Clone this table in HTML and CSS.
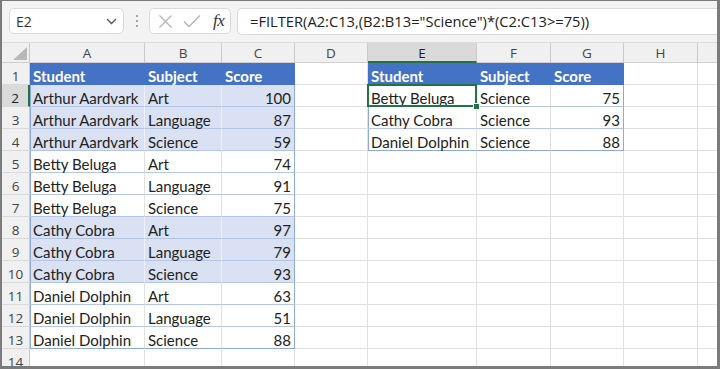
FILE: index.html
```html
<!DOCTYPE html>
<html>
<head>
<meta charset="utf-8">
<link rel="stylesheet" href="styles.css">
</head>
<body>
<div class="frame">
  <div class="topbar">
    <div class="namebox"><span class="nb-text">E2</span>
      <svg class="chev" width="11" height="7" viewBox="0 0 11 7"><path d="M1 1 L5.5 5.5 L10 1" fill="none" stroke="#555" stroke-width="1.3"/></svg>
    </div>
    <div class="dots"><i></i><i></i><i></i></div>
    <div class="fxbox">
      <svg width="15" height="15" viewBox="0 0 15 15"><path d="M1.5 1.5 L13.5 13.5 M13.5 1.5 L1.5 13.5" stroke="#b3b3b3" stroke-width="1.3" fill="none"/></svg>
      <svg width="18" height="14" viewBox="0 0 18 14"><path d="M1 7.5 L6 12.5 L17 1.5" stroke="#b3b3b3" stroke-width="1.3" fill="none"/></svg>
      <span class="fx">fx</span>
    </div>
    <div class="formula">=FILTER(A2:C13,(B2:B13="Science")*(C2:C13&gt;=75))</div>
  </div>
  <div class="grid">
    <div class="cell hd corner"><span class="tri"></span></div>
    <div class="cell hd">A</div><div class="cell hd">B</div><div class="cell hd">C</div><div class="cell hd">D</div>
    <div class="cell hd sel-col">E</div><div class="cell hd">F</div><div class="cell hd">G</div><div class="cell hd">H</div><div class="cell hd"></div>

    <div class="cell rn">1</div>
    <div class="cell th">Student</div><div class="cell th">Subject</div><div class="cell th">Score</div><div class="cell"></div>
    <div class="cell th">Student</div><div class="cell th">Subject</div><div class="cell th">Score</div><div class="cell"></div><div class="cell"></div>

    <div class="cell rn sel-row">2</div>
    <div class="cell t band tl">Arthur Aardvark</div><div class="cell t band">Art</div><div class="cell t band tr num">100</div><div class="cell"></div>
    <div class="cell t tl active">Betty Beluga<span class="handle"></span></div><div class="cell t">Science</div><div class="cell t tr num">75</div><div class="cell"></div><div class="cell"></div>

    <div class="cell rn">3</div>
    <div class="cell t band tl">Arthur Aardvark</div><div class="cell t band">Language</div><div class="cell t band tr num">87</div><div class="cell"></div>
    <div class="cell t tl">Cathy Cobra</div><div class="cell t">Science</div><div class="cell t tr num">93</div><div class="cell"></div><div class="cell"></div>

    <div class="cell rn">4</div>
    <div class="cell t band tl">Arthur Aardvark</div><div class="cell t band">Science</div><div class="cell t band tr num">59</div><div class="cell"></div>
    <div class="cell t tl tb">Daniel Dolphin</div><div class="cell t tb">Science</div><div class="cell t tr tb num">88</div><div class="cell"></div><div class="cell"></div>

    <div class="cell rn">5</div>
    <div class="cell t tl">Betty Beluga</div><div class="cell t">Art</div><div class="cell t tr num">74</div><div class="cell"></div>
    <div class="cell"></div><div class="cell"></div><div class="cell"></div><div class="cell"></div><div class="cell"></div>

    <div class="cell rn">6</div>
    <div class="cell t tl">Betty Beluga</div><div class="cell t">Language</div><div class="cell t tr num">91</div><div class="cell"></div>
    <div class="cell"></div><div class="cell"></div><div class="cell"></div><div class="cell"></div><div class="cell"></div>

    <div class="cell rn">7</div>
    <div class="cell t tl">Betty Beluga</div><div class="cell t">Science</div><div class="cell t tr num">75</div><div class="cell"></div>
    <div class="cell"></div><div class="cell"></div><div class="cell"></div><div class="cell"></div><div class="cell"></div>

    <div class="cell rn">8</div>
    <div class="cell t band tl">Cathy Cobra</div><div class="cell t band">Art</div><div class="cell t band tr num">97</div><div class="cell"></div>
    <div class="cell"></div><div class="cell"></div><div class="cell"></div><div class="cell"></div><div class="cell"></div>

    <div class="cell rn">9</div>
    <div class="cell t band tl">Cathy Cobra</div><div class="cell t band">Language</div><div class="cell t band tr num">79</div><div class="cell"></div>
    <div class="cell"></div><div class="cell"></div><div class="cell"></div><div class="cell"></div><div class="cell"></div>

    <div class="cell rn">10</div>
    <div class="cell t band tl">Cathy Cobra</div><div class="cell t band">Science</div><div class="cell t band tr num">93</div><div class="cell"></div>
    <div class="cell"></div><div class="cell"></div><div class="cell"></div><div class="cell"></div><div class="cell"></div>

    <div class="cell rn">11</div>
    <div class="cell t tl">Daniel Dolphin</div><div class="cell t">Art</div><div class="cell t tr num">63</div><div class="cell"></div>
    <div class="cell"></div><div class="cell"></div><div class="cell"></div><div class="cell"></div><div class="cell"></div>

    <div class="cell rn">12</div>
    <div class="cell t tl">Daniel Dolphin</div><div class="cell t">Language</div><div class="cell t tr num">51</div><div class="cell"></div>
    <div class="cell"></div><div class="cell"></div><div class="cell"></div><div class="cell"></div><div class="cell"></div>

    <div class="cell rn">13</div>
    <div class="cell t tl tb">Daniel Dolphin</div><div class="cell t tb">Science</div><div class="cell t tr tb num">88</div><div class="cell"></div>
    <div class="cell"></div><div class="cell"></div><div class="cell"></div><div class="cell"></div><div class="cell"></div>

    <div class="cell rn last">14</div>
    <div class="cell"></div><div class="cell"></div><div class="cell"></div><div class="cell"></div>
    <div class="cell"></div><div class="cell"></div><div class="cell"></div><div class="cell"></div><div class="cell"></div>
  </div>
</div>
</body>
</html>
```

FILE: styles.css
```css
html, body {
  margin: 0;
  padding: 0;
  background: #ffffff;
}
.frame {
  width: 720px;
  height: 369px;
  box-sizing: border-box;
  border-style: solid;
  border-color: #7b7b7b;
  border-width: 1px 3px 3px 2px;
  overflow: hidden;
  display: flex;
  flex-direction: column;
  background: #ffffff;
}
.topbar {
  height: 42px;
  flex: none;
  box-sizing: border-box;
  background: #f3f3f3;
  border-bottom: 1px solid #dcdcdc;
  display: flex;
  align-items: flex-start;
  padding: 7px 0 0 7px;
  font-family: "Open Sans", "Noto Sans", sans-serif;
}
.namebox {
  width: 115px;
  height: 26px;
  box-sizing: border-box;
  background: #ffffff;
  border: 1px solid #d9d9d9;
  border-radius: 5px;
  display: flex;
  align-items: center;
  justify-content: space-between;
  padding: 0 6px 0 6px;
}
.nb-text {
  font-size: 14px;
  color: #333333;
}
.chev { margin-top: 1px; }
.dots {
  width: 25px;
  height: 26px;
  display: flex;
  flex-direction: column;
  align-items: center;
  justify-content: center;
  gap: 3px;
}
.dots i {
  display: block;
  width: 2px;
  height: 2px;
  background: #8a8a8a;
  border-radius: 1px;
}
.fxbox {
  width: 82px;
  height: 26px;
  box-sizing: border-box;
  background: #ffffff;
  border: 1px solid #d9d9d9;
  border-radius: 5px;
  display: flex;
  align-items: center;
  padding: 0 4px 0 8px;
  gap: 10px;
}
.fx {
  font-family: "Liberation Serif", "DejaVu Serif", serif;
  font-style: italic;
  font-size: 17px;
  color: #333333;
  margin-left: 2px;
  letter-spacing: -0.5px;
}
.formula {
  flex: 1;
  margin-left: 6px;
  height: 27px;
  box-sizing: border-box;
  background: #ffffff;
  border: 1px solid #d9d9d9;
  border-right: none;
  border-radius: 5px 0 0 5px;
  padding: 0 0 0 12px;
  font-size: 14.7px;
  line-height: 25px;
  color: #222222;
  white-space: nowrap;
}
.grid {
  flex: 1;
  display: grid;
  grid-template-columns: 28px 115px 77px 73px 73px 109px 74px 73px 74px 40px;
  grid-template-rows: 20px repeat(14, 22px);
  overflow: hidden;
  font-family: "Lato", "Carlito", sans-serif;
  font-size: 15px;
  color: #222222;
}
.cell {
  box-sizing: border-box;
  border-right: 1px solid #e1e1e1;
  border-bottom: 1px solid #e1e1e1;
  padding: 3px 3px 0 3px;
  line-height: 21px;
  white-space: nowrap;
}
.hd {
  background: #f0f0f0;
  border-right: 1px solid #c9c9c9;
  border-bottom: 1px solid #cfcfcf;
  text-align: center;
  font-family: "Open Sans", "Noto Sans", sans-serif;
  font-size: 13.5px;
  line-height: 19px;
  padding: 1px 0 0 0;
  color: #444444;
}
.corner { position: relative; }
.tri {
  position: absolute;
  right: 2px;
  bottom: 2px;
  width: 0;
  height: 0;
  border-left: 14px solid transparent;
  border-bottom: 13px solid #b8b8b8;
}
.sel-col {
  background: #dadada;
  border-bottom: 2px solid #217346;
  color: #222222;
}
.rn {
  background: #f0f0f0;
  border-right: 1px solid #c9c9c9;
  border-bottom: 1px solid #d9d9d9;
  text-align: center;
  font-family: "Open Sans", "Noto Sans", sans-serif;
  font-size: 13.5px;
  line-height: 20px;
  padding: 3px 0 0 0;
  color: #444444;
}
.last { overflow: hidden; }
.sel-row {
  background: #dadada;
  border-right: 2px solid #217346;
  color: #222222;
}
.th {
  background: #4472c4;
  color: #ffffff;
  font-weight: bold;
  border-right-color: #4472c4;
  border-bottom-color: #4472c4;
}
.t {
  border-bottom-color: #b4c6e7;
}
.band {
  background: #d9e1f2;
  border-right-color: #eef1f8;
}
.tl { box-shadow: inset 1px 0 0 #8ea9db; }
.tr { border-right-color: #8ea9db; }
.tb { border-bottom-color: #8ea9db; }
.num { text-align: right; }
.active { position: relative; }
.active::after {
  content: "";
  position: absolute;
  left: -1px;
  top: -1px;
  right: -1px;
  bottom: -1px;
  border: 2px solid #217346;
  pointer-events: none;
}
.handle {
  position: absolute;
  right: -4px;
  bottom: -4px;
  width: 5px;
  height: 5px;
  background: #217346;
  border: 1px solid #ffffff;
  z-index: 2;
}
```
